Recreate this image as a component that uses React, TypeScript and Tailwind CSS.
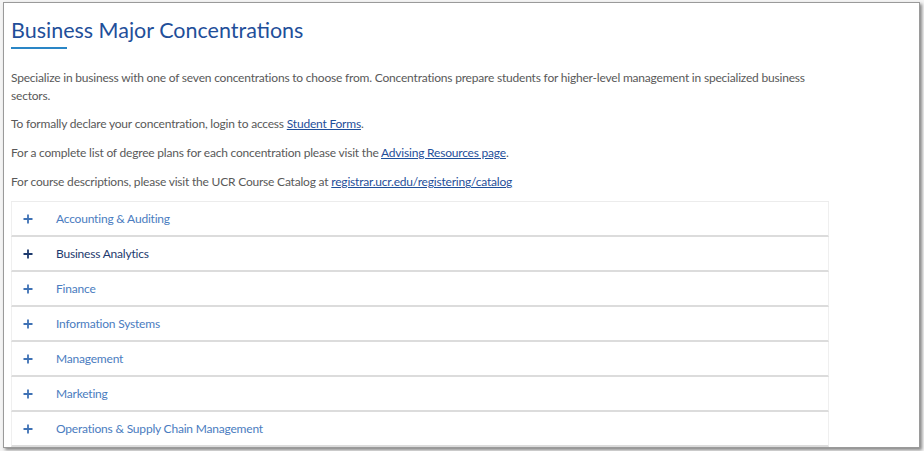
import React from "react";

const items = [
  "Accounting & Auditing",
  "Business Analytics",
  "Finance",
  "Information Systems",
  "Management",
  "Marketing",
  "Operations & Supply Chain Management",
];

function Plus({ dark }: { dark?: boolean }) {
  return (
    <svg width="10" height="10" viewBox="0 0 10 10" className="shrink-0">
      <path d="M5 0.5V9.5M0.5 5H9.5" stroke={dark ? "#1d3a6e" : "#3f72b5"} strokeWidth="1.8" />
    </svg>
  );
}

export default function App() {
  return (
    <div className="w-[924px] h-[451px] bg-[#f4f4f4] overflow-hidden" style={{ fontFamily: "Lato, 'Open Sans', sans-serif" }}>
      <div className="ml-[3px] mt-[2px] w-[917px] h-[446px] bg-white border border-[#9a9a9a] shadow-[2px_2px_3px_rgba(0,0,0,0.45)] overflow-hidden">
        <div className="pl-[7px] pt-[13px]">
          <h1 className="text-[21.5px] leading-[28px] text-[#1f4f9a]">Business Major Concentrations</h1>
          <div className="mt-[3px] w-[56px] h-[2px] bg-[#2a86c6]" />
          <div className="mt-[20px] text-[12px] leading-[18px] tracking-[-0.2px] text-[#595959] w-[830px]">
            <p>
              Specialize in business with one of seven concentrations to choose from. Concentrations prepare students for higher-level management in specialized business sectors.
            </p>
            <p className="mt-[10px]">
              To formally declare your concentration, login to access{" "}
              <a className="text-[#1f4f9a] underline">Student Forms</a>.
            </p>
            <p className="mt-[11px]">
              For a complete list of degree plans for each concentration please visit the{" "}
              <a className="text-[#1f4f9a] underline">Advising Resources page</a>.
            </p>
            <p className="mt-[11px]">
              For course descriptions, please visit the UCR Course Catalog at{" "}
              <a className="text-[#1f4f9a] underline">registrar.ucr.edu/registering/catalog</a>
            </p>
          </div>
          <div className="mt-[10px] w-[818px] border-t border-[#ececec]">
            {items.map((it, i) => (
              <div
                key={it}
                className="h-[35px] flex items-center border-b-2 border-x border-x-[#efefef] border-b-[#dcdcdc]"
              >
                <div className="w-[44px] pl-[11px] flex items-center">
                  <Plus dark={i === 1} />
                </div>
                <span className={"text-[12px] tracking-[-0.2px] " + (i === 1 ? "text-[#1d3a6e]" : "text-[#4a7cc0]")}>{it}</span>
              </div>
            ))}
          </div>
        </div>
      </div>
    </div>
  );
}
